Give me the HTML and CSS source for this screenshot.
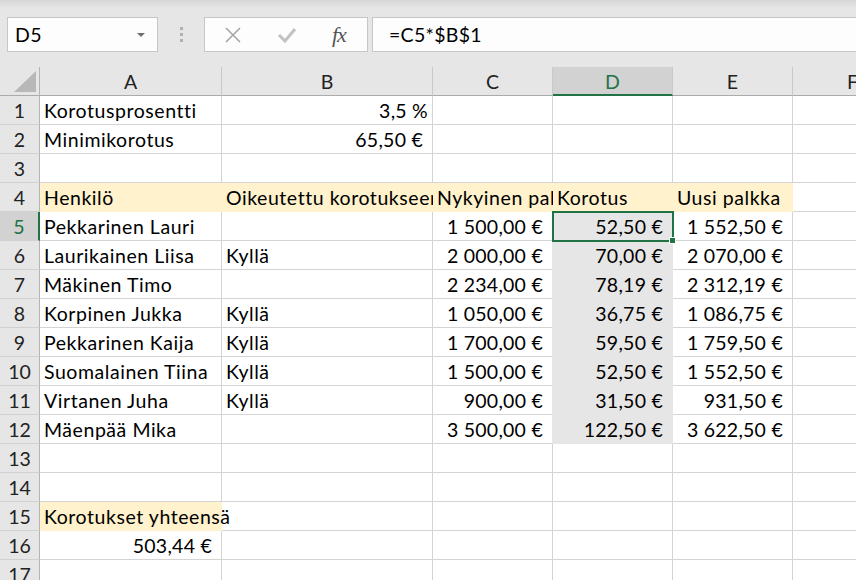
FILE: index.html
```html
<!DOCTYPE html>
<html lang="fi">
<head>
    <meta charset="UTF-8">
    <meta name="viewport" content="width=device-width, initial-scale=1.0">
    <title>Palkankorotukset</title>
    <link rel="stylesheet" href="styles.css">
</head>
<body>
    <div class="app">
        <!-- Name box + formula bar -->
        <div class="toolbar">
            <div class="name-box">
                <span>D5</span>
                <span class="caret"></span>
            </div>
            <div class="grip"><i></i><i></i><i></i></div>
            <div class="fx-buttons">
                <svg class="icon-cancel" width="18" height="18" viewBox="0 0 18 18">
                    <path d="M2 2 L16 16 M16 2 L2 16" stroke="#a6a6a6" stroke-width="1.6" fill="none"/>
                </svg>
                <svg class="icon-enter" width="20" height="18" viewBox="0 0 20 18">
                    <path d="M2 9 L8 15 L18 3" stroke="#c2c2c2" stroke-width="3" fill="none"/>
                </svg>
                <span class="fx">fx</span>
            </div>
            <div class="formula">=C5*$B$1</div>
        </div>

        <!-- Worksheet -->
        <div class="sheet">
            <div class="hd corner"><span class="tri"></span></div>
            <div class="hd col">A</div>
            <div class="hd col">B</div>
            <div class="hd col">C</div>
            <div class="hd col active">D</div>
            <div class="hd col">E</div>
            <div class="hd col">F</div>

            <div class="hd row">1</div>
            <div class="c">Korotusprosentti</div>
            <div class="c num">3,5 %</div>
            <div class="c"></div><div class="c"></div><div class="c"></div><div class="c"></div>

            <div class="hd row">2</div>
            <div class="c">Minimikorotus</div>
            <div class="c num eur">65,50 €</div>
            <div class="c"></div><div class="c"></div><div class="c"></div><div class="c"></div>

            <div class="hd row">3</div>
            <div class="c"></div><div class="c"></div><div class="c"></div><div class="c"></div><div class="c"></div><div class="c"></div>

            <div class="hd row">4</div>
            <div class="c yellow">Henkilö</div>
            <div class="c yellow">Oikeutettu korotukseen</div>
            <div class="c yellow">Nykyinen palkka</div>
            <div class="c yellow">Korotus</div>
            <div class="c yellow">Uusi palkka</div>
            <div class="c"></div>

            <div class="hd row active">5</div>
            <div class="c">Pekkarinen Lauri</div>
            <div class="c"></div>
            <div class="c num eur">1 500,00 €</div>
            <div class="c num eur gray selected">52,50 €<span class="handle"></span></div>
            <div class="c num eur">1 552,50 €</div>
            <div class="c"></div>

            <div class="hd row">6</div>
            <div class="c">Laurikainen Liisa</div>
            <div class="c">Kyllä</div>
            <div class="c num eur">2 000,00 €</div>
            <div class="c num eur gray">70,00 €</div>
            <div class="c num eur">2 070,00 €</div>
            <div class="c"></div>

            <div class="hd row">7</div>
            <div class="c">Mäkinen Timo</div>
            <div class="c"></div>
            <div class="c num eur">2 234,00 €</div>
            <div class="c num eur gray">78,19 €</div>
            <div class="c num eur">2 312,19 €</div>
            <div class="c"></div>

            <div class="hd row">8</div>
            <div class="c">Korpinen Jukka</div>
            <div class="c">Kyllä</div>
            <div class="c num eur">1 050,00 €</div>
            <div class="c num eur gray">36,75 €</div>
            <div class="c num eur">1 086,75 €</div>
            <div class="c"></div>

            <div class="hd row">9</div>
            <div class="c">Pekkarinen Kaija</div>
            <div class="c">Kyllä</div>
            <div class="c num eur">1 700,00 €</div>
            <div class="c num eur gray">59,50 €</div>
            <div class="c num eur">1 759,50 €</div>
            <div class="c"></div>

            <div class="hd row">10</div>
            <div class="c">Suomalainen Tiina</div>
            <div class="c">Kyllä</div>
            <div class="c num eur">1 500,00 €</div>
            <div class="c num eur gray">52,50 €</div>
            <div class="c num eur">1 552,50 €</div>
            <div class="c"></div>

            <div class="hd row">11</div>
            <div class="c">Virtanen Juha</div>
            <div class="c">Kyllä</div>
            <div class="c num eur">900,00 €</div>
            <div class="c num eur gray">31,50 €</div>
            <div class="c num eur">931,50 €</div>
            <div class="c"></div>

            <div class="hd row">12</div>
            <div class="c">Mäenpää Mika</div>
            <div class="c"></div>
            <div class="c num eur">3 500,00 €</div>
            <div class="c num eur gray">122,50 €</div>
            <div class="c num eur">3 622,50 €</div>
            <div class="c"></div>

            <div class="hd row">13</div>
            <div class="c"></div><div class="c"></div><div class="c"></div><div class="c"></div><div class="c"></div><div class="c"></div>

            <div class="hd row">14</div>
            <div class="c"></div><div class="c"></div><div class="c"></div><div class="c"></div><div class="c"></div><div class="c"></div>

            <div class="hd row">15</div>
            <div class="c yellow">Korotukset yhteensä</div>
            <div class="c"></div><div class="c"></div><div class="c"></div><div class="c"></div><div class="c"></div>

            <div class="hd row">16</div>
            <div class="c num eur">503,44 €</div>
            <div class="c"></div><div class="c"></div><div class="c"></div><div class="c"></div><div class="c"></div>

            <div class="hd row">17</div>
            <div class="c"></div><div class="c"></div><div class="c"></div><div class="c"></div><div class="c"></div><div class="c"></div>
        </div>
    </div>
</body>
</html>
```

FILE: styles.css
```css
* { margin: 0; padding: 0; box-sizing: border-box; }

body { font-family: 'Lato', 'Open Sans', sans-serif; font-size: 19.5px; color: #000; background: #fff; }

.app { width: 856px; height: 580px; overflow: hidden; }

/* toolbar */
.toolbar { height: 67px; display: flex; align-items: flex-start; padding-top: 17px; background: linear-gradient(#d6d6d6 0px, #e6e6e6 8px); }

.name-box { margin-left: 7px; width: 151px; height: 35px; display: flex; align-items: center; justify-content: space-between; padding: 0 12px 0 7px; background: #fdfdfd; border: 1px solid #c6c6c6; letter-spacing: 0.3px; }

.caret { width: 0; height: 0; border-left: 4px solid transparent; border-right: 4px solid transparent; border-top: 4px solid #6e6e6e; }

.grip { width: 46px; height: 35px; display: flex; flex-direction: column; align-items: center; justify-content: center; gap: 3px; }

.grip i { display: block; width: 3px; height: 3px; background: #b0b0b0; }

.fx-buttons { width: 164px; height: 35px; display: flex; align-items: center; padding-left: 19px; background: #fdfdfd; border: 1px solid #c6c6c6; }

.icon-cancel { margin-right: 35px; }

.icon-enter { margin-right: 35px; }

.fx { font-family: 'Liberation Serif', serif; font-style: italic; font-size: 22px; color: #555; letter-spacing: -1px; }

.formula { flex: 1; height: 35px; margin-left: 4px; padding-left: 16px; display: flex; align-items: center; background: #fdfdfd; border: 1px solid #c6c6c6; border-right: none; letter-spacing: 0.3px; }

/* worksheet grid */
.sheet { display: grid; grid-template-columns: 40px 182px 211px 120px 120px 120px 120px; grid-auto-rows: 29px; width: 913px; background: #fff; }

.hd { background: #e6e6e6; border-right: 1px solid #c9c9c9; border-bottom: 1px solid #d0d0d0; text-align: center; line-height: 29px; color: #222; }

.hd.col { border-bottom-color: #ababab; }

.hd.row { border-right-color: #b4b4b4; }

.hd.corner { position: relative; border-bottom-color: #ababab; border-right-color: #b4b4b4; }

.tri { position: absolute; right: 3px; bottom: 3px; width: 22px; height: 21px; background: #b8b8b8; clip-path: polygon(100% 0, 100% 100%, 0 100%); }

.hd.active { background: #d2d2d2; color: #217346; }

.hd.col.active { border-bottom: 2px solid #217346; }

.hd.row.active { border-right: 2px solid #217346; }

.c { border-right: 1px solid #d4d4d4; border-bottom: 1px solid #d4d4d4; padding: 1px 4px 0; line-height: 28px; white-space: nowrap; letter-spacing: 0.55px; }

.num { text-align: right; letter-spacing: 0.25px; }

.eur { padding-right: 9px; }

.yellow { background: #fff2cc; border-color: #fff2cc; }

.gray { background: #e7e6e6; border-color: #e7e6e6; box-shadow: -1px 0 0 #e7e6e6; }

.selected { position: relative; z-index: 2; }

.selected::after { content: ""; position: absolute; left: -1px; top: -1px; right: -2px; bottom: -2px; border: 2px solid #217346; }

.handle { position: absolute; right: -4px; bottom: -4px; width: 7px; height: 7px; background: #217346; border: 1px solid #fff; z-index: 3; }
```
